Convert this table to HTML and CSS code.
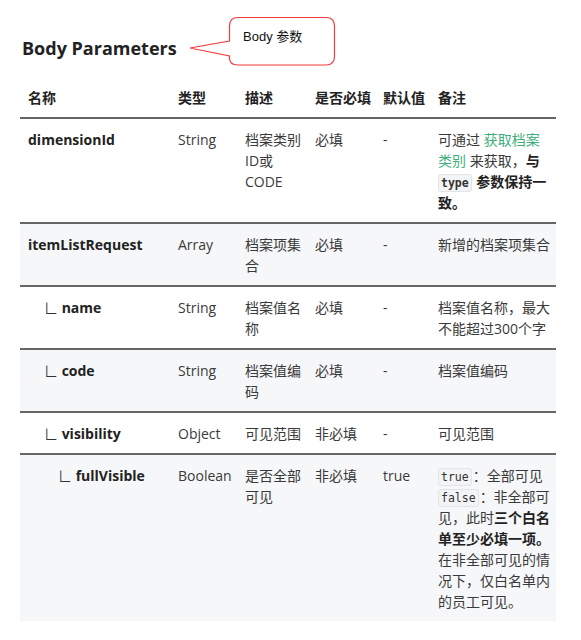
FILE: index.html
```html
<!DOCTYPE html>
<html lang="zh-CN">
<head>
    <meta charset="UTF-8">
    <title>Body Parameters</title>
    <link rel="stylesheet" href="styles.css">
</head>
<body>
    <div class="page">
        <h2 class="title">Body Parameters</h2>

        <!-- 标注气泡 -->
        <div class="callout">
            <svg width="152" height="56" viewBox="0 0 152 56">
                <path d="M52 5.5 H140 Q148.5 5.5 148.5 14 V44.5 Q148.5 53 140 53 H52 Q43.5 53 43.5 46 V44 L4 36 L43.5 29 V14 Q43.5 5.5 52 5.5 Z" fill="#fff" stroke="#f03c3c" stroke-width="1.2"/>
            </svg>
            <span class="callout-text">Body 参数</span>
        </div>

        <table class="params">
            <colgroup>
                <col class="c-name">
                <col class="c-type">
                <col class="c-desc">
                <col class="c-req">
                <col class="c-def">
                <col class="c-note">
            </colgroup>
            <thead>
                <tr>
                    <th>名称</th>
                    <th>类型</th>
                    <th>描述</th>
                    <th>是否必填</th>
                    <th>默认值</th>
                    <th>备注</th>
                </tr>
            </thead>
            <tbody>
                <tr>
                    <td><b>dimensionId</b></td>
                    <td>String</td>
                    <td>档案类别ID或 CODE</td>
                    <td>必填</td>
                    <td>-</td>
                    <td>可通过 <a href="#">获取档案类别</a> 来获取，<b>与 <code>type</code> 参数保持一致。</b></td>
                </tr>
                <tr>
                    <td><b>itemListRequest</b></td>
                    <td>Array</td>
                    <td>档案项集合</td>
                    <td>必填</td>
                    <td>-</td>
                    <td>新增的档案项集合</td>
                </tr>
                <tr>
                    <td class="lv1"><span class="tree">∟</span> <b>name</b></td>
                    <td>String</td>
                    <td>档案值名称</td>
                    <td>必填</td>
                    <td>-</td>
                    <td>档案值名称，最大不能超过300个字</td>
                </tr>
                <tr>
                    <td class="lv1"><span class="tree">∟</span> <b>code</b></td>
                    <td>String</td>
                    <td>档案值编码</td>
                    <td>必填</td>
                    <td>-</td>
                    <td>档案值编码</td>
                </tr>
                <tr>
                    <td class="lv1"><span class="tree">∟</span> <b>visibility</b></td>
                    <td>Object</td>
                    <td>可见范围</td>
                    <td>非必填</td>
                    <td>-</td>
                    <td>可见范围</td>
                </tr>
                <tr>
                    <td class="lv2"><span class="tree">∟</span> <b>fullVisible</b></td>
                    <td>Boolean</td>
                    <td>是否全部可见</td>
                    <td>非必填</td>
                    <td>true</td>
                    <td><code>true</code>：全部可见<br><code>false</code>：非全部可见，此时<b>三个白名单至少必填一项。</b>在非全部可见的情况下，仅白名单内的员工可见。</td>
                </tr>
            </tbody>
        </table>
    </div>
</body>
</html>
```

FILE: styles.css
```css
*{margin: 0; padding: 0; box-sizing: border-box;}
body {background: #fff; font-family: "Open Sans", "Noto Sans CJK SC", sans-serif; font-size: 14px; color: #3a3a3a;}

.page {position: relative; width: 581px; padding: 34px 25px 0 20px;}

.title {font-size: 18px; line-height: 28px; font-weight: 700; color: #222; padding-left: 2px;}

/* 气泡标注 */
.callout {position: absolute; left: 186px; top: 12px; width: 152px; height: 56px;}
.callout svg {display: block;}
.callout-text {position: absolute; left: 57px; top: 17px; line-height: 16px; font-family: "Liberation Sans", "Noto Sans CJK SC", sans-serif; font-size: 13px; color: #111;}

/* 参数表 */
.params {width: 536px; margin-top: 15px; border-collapse: collapse; table-layout: fixed;}
.c-name {width: 150px;}
.c-type {width: 67px;}
.c-desc {width: 70px;}
.c-req {width: 68px;}
.c-def {width: 55px;}
.c-note {width: 126px;}

.params th, .params td {text-align: left; vertical-align: top; line-height: 21px; padding: 10px 2px 9px 8px;}
.params th:last-child, .params td:last-child {padding-right: 4px;}
.params th {font-weight: 700; color: #222;}
.params thead tr {border-bottom: 2px solid #666;}
.params tbody tr {border-top: 2px solid #666;}
.params tbody tr:first-child {border-top: none;}
.params tbody tr:nth-child(even) {background: #f6f7f9;}

.params b {font-weight: 700; color: #222;}
.params a {color: #3eaf7c; text-decoration: none;}
.params code {font-family: "DejaVu Sans Mono", monospace; font-size: 11.5px; line-height: 14px; color: #333; background: #f3f4f6; border: 1px solid #e2e4e8; border-radius: 3px; padding: 1px 2px; margin-right: 1px;}

.lv1 {padding-left: 24px !important;}
.lv2 {padding-left: 38px !important;}
.tree {font-family: "Noto Sans CJK SC", sans-serif; font-size: 14px; font-weight: 400; color: #333;}
```
